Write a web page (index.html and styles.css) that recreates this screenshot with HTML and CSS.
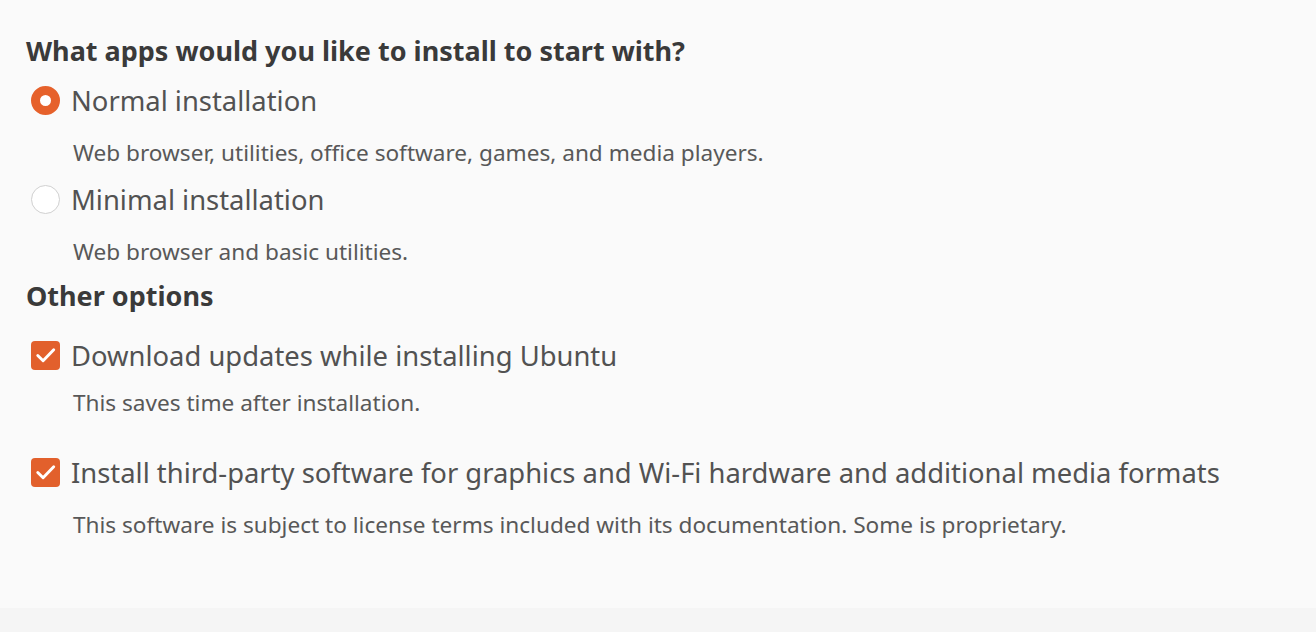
FILE: index.html
```html
<!DOCTYPE html>
<html>
<head>
    <title>Updates and other software</title>
    <meta name="viewport" content="width=device-width, initial-scale=1.0">
    <link rel="stylesheet" href="styles.css">
</head>
<body>
    <div class="page">
        <h2 class="heading">What apps would you like to install to start with?</h2>

        <!-- Install type -->
        <div class="option">
            <span class="radio checked"></span>
            <span class="label">Normal installation</span>
        </div>
        <p class="desc">Web browser, utilities, office software, games, and media players.</p>

        <div class="option">
            <span class="radio"></span>
            <span class="label">Minimal installation</span>
        </div>
        <p class="desc">Web browser and basic utilities.</p>

        <h2 class="heading other">Other options</h2>

        <!-- Other options -->
        <div class="option check-row">
            <span class="checkbox">
                <svg viewBox="0 0 30 30" width="30" height="30"><path d="M7 15.5l5.5 5.5L23.5 9.5" fill="none" stroke="#fff" stroke-width="3" stroke-linecap="round" stroke-linejoin="round"/></svg>
            </span>
            <span class="label">Download updates while installing Ubuntu</span>
        </div>
        <p class="desc tight">This saves time after installation.</p>

        <div class="option check-row second">
            <span class="checkbox">
                <svg viewBox="0 0 30 30" width="30" height="30"><path d="M7 15.5l5.5 5.5L23.5 9.5" fill="none" stroke="#fff" stroke-width="3" stroke-linecap="round" stroke-linejoin="round"/></svg>
            </span>
            <span class="label">Install third-party software for graphics and Wi-Fi hardware and additional media formats</span>
        </div>
        <p class="desc">This software is subject to license terms included with its documentation. Some is proprietary.</p>
    </div>
    <div class="bottom"></div>
</body>
</html>
```

FILE: styles.css
```css
html, body {
    margin: 0;
    height: 100%;
}
body {
    font-family: "Noto Sans", "DejaVu Sans", sans-serif;
    background: #fafafa;
    color: #4c4c4c;
    display: flex;
    flex-direction: column;
    overflow: hidden;
}
.page {
    flex: 1;
    padding: 33px 0 0 26px;
}
.heading {
    margin: 0;
    font-size: 27px;
    font-weight: bold;
    color: #3a3a3a;
    line-height: 36px;
}
.heading.other {
    margin-top: 11px;
}
.option {
    display: flex;
    align-items: center;
    gap: 9px;
    height: 34px;
    margin-top: 14px;
}
.label {
    font-size: 27.4px;
    color: #525252;
    white-space: nowrap;
}
.desc {
    margin: 21px 0 0 47px;
    font-size: 22.6px;
    line-height: 30px;
    color: #585858;
    white-space: nowrap;
}
.desc.tight {
    margin-top: 16px;
}
.radio {
    width: 29px;
    height: 29px;
    margin-left: 5px;
    margin-right: 2px;
    border-radius: 50%;
    border: 1px solid #d0d0d0;
    background: #fff;
    box-sizing: border-box;
}
.radio.checked {
    border: 9.5px solid #e6612b;
}
.checkbox {
    width: 29px;
    height: 29px;
    margin-left: 5px;
    margin-right: 2px;
    border-radius: 4px;
    background: #e2602c;
    display: flex;
    align-items: center;
    justify-content: center;
}
.check-row {
    margin-top: 24px;
}
.check-row.second {
    margin-top: 37px;
}
.bottom {
    height: 24px;
    background: #f5f5f5;
}
```
